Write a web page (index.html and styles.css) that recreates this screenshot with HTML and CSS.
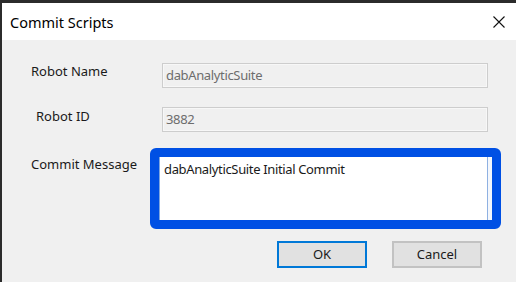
FILE: index.html
```html
<!DOCTYPE html>
<html>
<head>
<meta charset="utf-8">
<link rel="stylesheet" href="styles.css">
</head>
<body>
<div class="window">
  <div class="titlebar">
    <span class="title">Commit Scripts</span>
    <svg class="close" width="12" height="12" viewBox="0 0 12 12"><path d="M0.5 0.5 L11.5 11.5 M11.5 0.5 L0.5 11.5" stroke="#111" stroke-width="1.1" fill="none"/></svg>
  </div>
  <div class="content">
    <div class="row row-name">
      <div class="label">Robot Name</div>
      <div class="field">dabAnalyticSuite</div>
    </div>
    <div class="row row-id">
      <div class="label label-id">Robot ID</div>
      <div class="field">3882</div>
    </div>
    <div class="row row-msg">
      <div class="label label-msg">Commit Message</div>
      <div class="highlight">
        <div class="memo">dabAnalyticSuite Initial Commit</div>
      </div>
    </div>
    <div class="buttons">
      <div class="btn btn-ok">OK</div>
      <div class="btn">Cancel</div>
    </div>
  </div>
</div>
</body>
</html>
```

FILE: styles.css
```css
html, body {
  margin: 0;
  padding: 0;
  background: #f0f0f0;
}
body {
  width: 516px;
  height: 282px;
  overflow: hidden;
  font-family: "Noto Sans", "Open Sans", sans-serif;
  font-size: 13px;
  color: #1a1a1a;
}
.window {
  height: 279px;
  border-top: 3px solid #2b2b2b;
  border-left: 2px solid #2b2b2b;
  background: #f0f0f0;
}
.titlebar {
  height: 37px;
  background: #ffffff;
  display: flex;
  align-items: center;
  justify-content: space-between;
  padding: 0 11px 0 8px;
}
.title {
  font-size: 14.5px;
  color: #000;
  padding-top: 1px;
}
.close {
  display: block;
  margin-top: 1px;
}
.content {
  padding: 23px 0 0 29px;
}
.row {
  display: flex;
  align-items: flex-start;
}
.label {
  width: 131px;
  margin-top: -2px;
  line-height: 20px;
}
.label-id {
  padding-left: 5px;
  width: 126px;
  margin-top: -1px;
}
.row-id {
  margin-top: 19px;
}
.field {
  width: 321px;
  height: 23px;
  border: 1px solid #cdcdcd;
  box-shadow: inset 0 0 0 1px #f7f7f7;
  background: #f0f0f0;
  color: #6d6d6d;
  line-height: 22px;
  padding-left: 3px;
  letter-spacing: -0.35px;
  box-sizing: content-box;
}
.row-msg {
  margin-top: 16px;
}
.label-msg {
  padding-top: 8px;
  width: 119px;
}
.highlight {
  width: 333px;
  height: 63px;
  border: 9px solid #0050e4;
  border-radius: 6px;
  background: #0050e4;
}
.memo {
  height: 63px;
  background: #ffffff;
  border-left: 1px solid #7fa6e0;
  border-right: 4px solid #f4f7fc;
  box-shadow: inset -1px 0 0 #8fb1e2;
  box-sizing: border-box;
  padding: 3px 0 0 4px;
  line-height: 18px;
  letter-spacing: -0.35px;
  color: #1a1a1a;
}
.buttons {
  display: flex;
  justify-content: flex-end;
  gap: 25px;
  margin-top: 12px;
  padding-right: 34px;
}
.btn {
  width: 86px;
  height: 23px;
  border: 2px solid #c2c2c2;
  background: #e1e1e1;
  text-align: center;
  line-height: 22px;
  color: #1a1a1a;
}
.btn-ok {
  border-color: #0078d7;
}
```
